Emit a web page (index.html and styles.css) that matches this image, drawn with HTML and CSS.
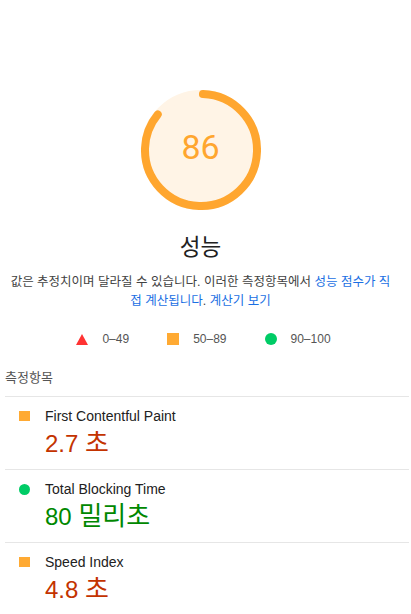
FILE: index.html
```html
<!DOCTYPE html>
<html lang="ko">
<head>
<meta charset="utf-8">
<title>성능</title>
<link rel="stylesheet" href="styles.css">
</head>
<body>
<section class="summary">
  <div class="gauge">
    <svg class="gauge-svg" viewBox="0 0 120 120" width="120" height="120">
      <circle class="gauge-base" cx="60" cy="60" r="56"></circle>
      <circle class="gauge-arc" cx="60" cy="60" r="56" transform="rotate(-88 60 60)"></circle>
    </svg>
    <div class="gauge-value">86</div>
  </div>
  <h1 class="title">성능</h1>
  <p class="desc">값은 추정치이며 달라질 수 있습니다. 이러한 측정항목에서 <a href="#">성능 점수가 직접 계산됩니다</a>. <a href="#">계산기 보기</a></p>
  <div class="legend">
    <span class="range"><span class="ico tri"></span>0–49</span>
    <span class="range"><span class="ico sq"></span>50–89</span>
    <span class="range"><span class="ico dot"></span>90–100</span>
  </div>
</section>
<section class="metrics">
  <div class="metrics-head">측정항목</div>
  <div class="metric">
    <span class="mico sq"></span>
    <div class="mname">First Contentful Paint</div>
    <div class="mval avg">2.7 <span class="unit">초</span></div>
  </div>
  <div class="metric">
    <span class="mico dot"></span>
    <div class="mname">Total Blocking Time</div>
    <div class="mval pass">80 <span class="unit">밀리초</span></div>
  </div>
  <div class="metric">
    <span class="mico sq"></span>
    <div class="mname">Speed Index</div>
    <div class="mval avg">4.8 <span class="unit">초</span></div>
  </div>
</section>
</body>
</html>
```
FILE: styles.css
```css
* { box-sizing: border-box; }
html, body { margin: 0; padding: 0; background: #fff; }
body {
  font-family: "Liberation Sans", Arial, "Noto Sans CJK KR", sans-serif;
  color: #212121;
  width: 411px;
}
.summary {
  width: 401px;
  padding-top: 90px;
  display: flex;
  flex-direction: column;
  align-items: center;
}
.gauge {
  display: grid;
  width: 120px;
  height: 120px;
}
.gauge-svg, .gauge-value { grid-area: 1 / 1; }
.gauge-svg { display: block; }
.gauge-base { fill: #fff4e6; stroke: #fff4e6; stroke-width: 8; }
.gauge-arc {
  fill: none;
  stroke: #ffa62f;
  stroke-width: 8;
  stroke-linecap: round;
  stroke-dasharray: 300 352;
}
.gauge-value {
  align-self: center;
  justify-self: center;
  font-family: Roboto, "Liberation Sans", sans-serif;
  font-size: 34px;
  line-height: 40px;
  color: #ffa62f;
  margin-top: -6px;
}
.title {
  margin: 25px 0 0;
  font-size: 22.5px;
  line-height: 26px;
  font-weight: normal;
  color: #212121;
  font-family: "Liberation Sans", "Noto Sans CJK KR", sans-serif;
}
.desc {
  margin: 12px 0 0;
  padding: 0 6px;
  font-size: 12.5px;
  line-height: 19px;
  text-align: center;
  color: #424242;
}
.desc a { color: #1a6fe3; text-decoration: none; }
.legend {
  margin-top: 20px;
  padding-left: 6px;
  display: flex;
  gap: 38px;
  font-size: 12px;
  line-height: 16px;
  color: #555;
}
.range { display: flex; align-items: center; gap: 14px; }
.ico { display: block; width: 12px; height: 12px; }
.tri { width: 0; height: 0; border-left: 6px solid transparent; border-right: 6px solid transparent; border-bottom: 11px solid #ff3333; }
.sq { background: #ffaa33; }
.dot { background: #00cc66; border-radius: 50%; }
.metrics {
  margin: 23px 2px 0 5px;
}
.metrics-head {
  font-size: 13px;
  line-height: 16px;
  color: #555;
  padding-bottom: 10px;
  border-bottom: 1px solid #e6e6e6;
}
.metric {
  display: grid;
  grid-template-columns: 11px 1fr;
  column-gap: 15px;
  row-gap: 6px;
  padding: 11px 0 11px 14px;
  border-bottom: 1px solid #e6e6e6;
}
.mico { width: 11px; height: 11px; align-self: center; }
.mico.sq { width: 11px; height: 10px; }
.mname { font-size: 14px; line-height: 16px; color: #212121; }
.mval {
  grid-column: 2;
  font-size: 24px;
  line-height: 28px;
  height: 28px;
}
.unit { font-size: 26px; line-height: 20px; }
.avg { color: #c33300; }
.pass { color: #008800; }
```
